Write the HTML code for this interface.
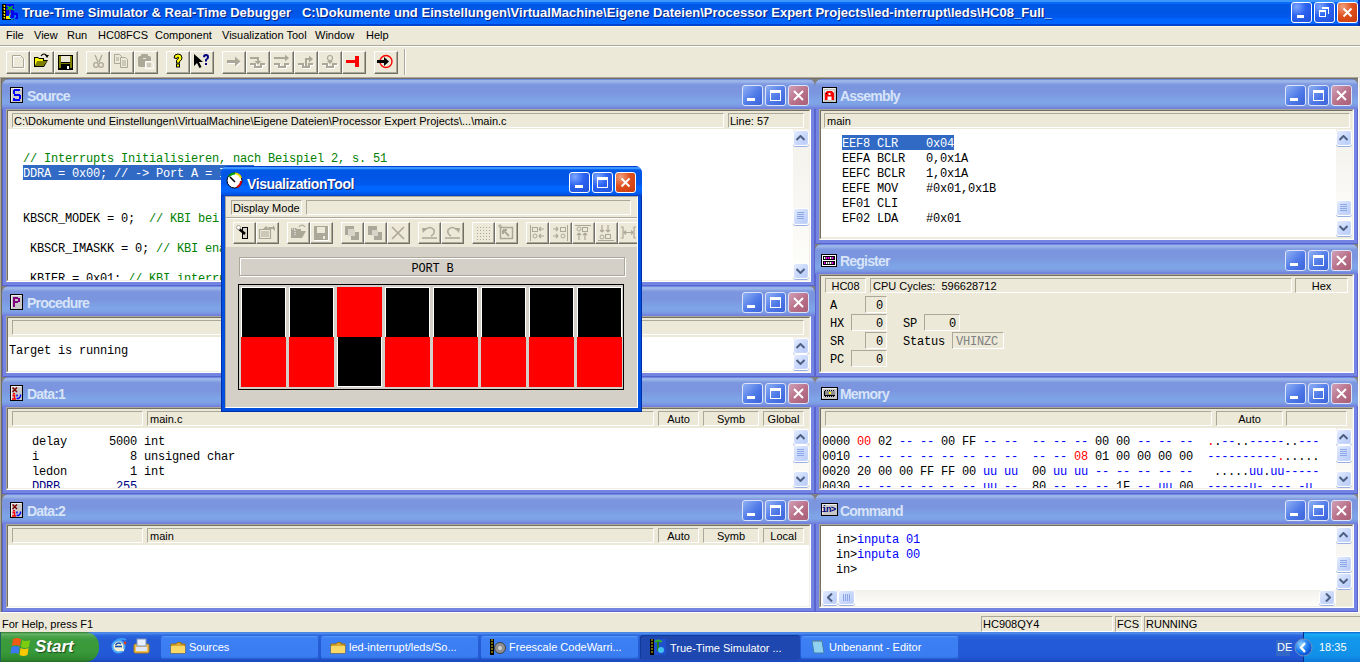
<!DOCTYPE html><html><head><meta charset="utf-8"><style>
*{margin:0;padding:0;box-sizing:border-box}
html,body{width:1360px;height:662px;overflow:hidden;background:#ECE9D8;font-family:"Liberation Sans",sans-serif;font-size:11px;color:#000;position:relative}
div,span.b{position:absolute}
.t{white-space:pre;line-height:13px}
.m{font-family:"Liberation Mono",monospace;font-size:12px;letter-spacing:-0.2px;line-height:15px;white-space:pre}
.cap{left:0;top:0;right:0;height:30px;background:linear-gradient(#6C8CE4 0,#6C8CE4 1px,#9BB5EA 1px,#9BB5EA 3px,#8AA4E4 4px,#7B96DF 6px,#7B96DF 14px,#7EA3E6 21px,#7EA3E6 25px,#7890E0 28px,#6F80DD 29px);border-radius:7px 7px 0 0}
.bd{background:#7484E2;box-shadow:inset 1px 0 0 #5A64CC,inset -1px 0 0 #5A64CC,inset 0 -1px 0 #5A64CC}
.ttl{font-weight:bold;font-size:14px;line-height:16px;color:#D8E4F8;white-space:pre;letter-spacing:-0.8px}
.cl{background:#ECE9D8;border-top:1px solid #ACA899;border-left:1px solid #ACA899;border-right:1px solid #fff;border-bottom:1px solid #fff}
.cl2{left:0;right:0;top:0;bottom:0;border-top:1px solid #716F64;border-left:1px solid #716F64;border-right:1px solid #F1EFE2;border-bottom:1px solid #F1EFE2}
.wb{width:21px;height:21px;border:1px solid #DDE4F8;border-radius:3px;background:linear-gradient(135deg,#8FB0F4 0,#4F7AE8 55%,#3B64DA 100%)}
.wbx{background:linear-gradient(135deg,#D0A0B8 0,#B87088 55%,#A86078 100%)}
.sp{border-top:1px solid #ACA899;border-left:1px solid #ACA899;border-right:1px solid #fff;border-bottom:1px solid #fff;background:#ECE9D8}
.rb{width:24px;height:23px;background:#ECE9D8;border-top:1px solid #fff;border-left:1px solid #fff;border-right:1px solid #716F64;border-bottom:1px solid #716F64;box-shadow:inset -1px -1px 0 #ACA899}
.ico{width:14px;height:17px;border:2px solid #000;background:#C8C8C8}
.wh{background:#fff}
.sbt{background:linear-gradient(180deg,#F3F1EC,#FEFEFB)}
.sbb{width:16px;height:16px;border:1px solid #fff;border-radius:3px;background:linear-gradient(135deg,#E4ECFE 0,#CAD9FC 50%,#B6C9F8 100%);box-shadow:0 1px 0 #98B0E4,inset -1px -1px 0 #C8D6F8}
.g{color:#008000}.bl{color:#0000FF}.nv{color:#000080}.rd{color:#FF0000}.gr{color:#808080}
</style></head><body>
<div style="left:0;top:0;width:1360px;height:26px;background:linear-gradient(#3D95FF 0,#3D95FF 2px,#0A6AF8 2px,#0A6AF8 4px,#0058E6 4px,#0055E5 12px,#005AEE 18px,#0066FF 19px,#0066FF 24px,#0044D0 24px)"></div>
<div class="t" style="left:22px;top:5px;font-size:13px;letter-spacing:0.02px;font-weight:bold;color:#fff;line-height:16px;text-shadow:1px 1px 0 #0A1E7A">True-Time Simulator &amp; Real-Time Debugger   C:\Dokumente und Einstellungen\VirtualMachine\Eigene Dateien\Processor Expert Projects\led-interrupt\leds\HC08_Full_</div>
<svg style="position:absolute;left:2px;top:4px" width="17" height="16"><rect x="0" y="0" width="12" height="16" fill="#000"/><path d="M1.5 1.5h1v1.5M1.5 4.5h1v1.5M1.5 7.5h1v1.5M1.5 10.5h1v1.5M1.5 13.5h1v1" stroke="#F8E800" stroke-width="1.2" fill="none"/><rect x="4" y="0" width="8" height="15" fill="#0000F0"/><path d="M9 8L16 9V15H9Z" fill="#0000F0"/><path d="M8 4V13" stroke="#A08020" stroke-width="1"/><path d="M5 2L8 4L11 2M5 6L8 4L12 6" stroke="#10D010" stroke-width="1.3" fill="none"/><circle cx="8" cy="4" r="1.3" fill="#10C010"/><rect x="4" y="12" width="4" height="3" fill="#F8E800"/><path d="M9 9.5A3 3 0 1 0 13 11" stroke="#20E0F8" stroke-width="1" fill="none"/></svg>
<div style="left:1291px;top:2px;width:21px;height:21px;border:1px solid #fff;border-radius:3px;background:radial-gradient(circle at 25% 20%,#7DA6FF 0,#2B62F0 45%,#1F50D8 100%)"></div><div style="left:1297px;top:15px;width:7px;height:3px;background:#fff"></div>
<div style="left:1314px;top:2px;width:21px;height:21px;border:1px solid #fff;border-radius:3px;background:radial-gradient(circle at 25% 20%,#7DA6FF 0,#2B62F0 45%,#1F50D8 100%)"></div><div style="left:1319px;top:10px;width:7px;height:7px;border:1px solid #fff;border-top-width:2px"></div><div style="left:1322px;top:7px;width:7px;height:7px;border-top:2px solid #fff;border-right:1px solid #fff"></div>
<div style="left:1337px;top:2px;width:21px;height:21px;border:1px solid #fff;border-radius:3px;background:radial-gradient(circle at 25% 20%,#F0A080 0,#E0501C 45%,#C83A10 100%)"></div><svg style="position:absolute;left:1342px;top:7px" width="11" height="11"><path d="M1.5 1.5L9.5 9.5M9.5 1.5L1.5 9.5" stroke="#fff" stroke-width="2"/></svg>
<div style="left:1358px;top:0;width:2px;height:26px;background:#0030B0"></div>
<div style="left:0;top:26px;width:1360px;height:1px;background:#FFF8DC"></div>
<div class="t" style="left:6px;top:29px">File</div>
<div class="t" style="left:34px;top:29px">View</div>
<div class="t" style="left:67px;top:29px">Run</div>
<div class="t" style="left:98px;top:29px">HC08FCS</div>
<div class="t" style="left:155px;top:29px">Component</div>
<div class="t" style="left:222px;top:29px">Visualization Tool</div>
<div class="t" style="left:315px;top:29px">Window</div>
<div class="t" style="left:366px;top:29px">Help</div>
<div style="left:0;top:45px;width:1360px;height:1px;background:#ACA899"></div>
<div style="left:0;top:46px;width:1360px;height:1px;background:#fff"></div>
<div class="rb" style="left:6px;top:51px"></div>
<svg style="position:absolute;left:6px;top:51px" width="24" height="23"><path d="M6.5 4.5H14.5L17.5 7.5V16.5H6.5Z" fill="none" stroke="#fff" transform="translate(1,1)"/><path d="M6.5 4.5H14.5L17.5 7.5V16.5H6.5Z" fill="none" stroke="#ACA899"/></svg>
<div class="rb" style="left:30px;top:51px"></div>
<svg style="position:absolute;left:30px;top:51px" width="24" height="23"><path d="M4 6H8L9 7H14V9H18L14 16H4Z" fill="#000"/><path d="M5 7H8L9 8H13V10L5 14Z" fill="#FFFF00"/><path d="M7 10H17L13.5 15H5Z" fill="#808000"/><path d="M11 5Q14 1 17 5" stroke="#000" stroke-width="1.2" fill="none"/><path d="M15 4H19L17 7Z" fill="#000"/></svg>
<div class="rb" style="left:54px;top:51px"></div>
<svg style="position:absolute;left:54px;top:51px" width="24" height="23"><rect x="4" y="4" width="15" height="15" fill="#000"/><rect x="5" y="5" width="2" height="12" fill="#808000"/><rect x="16" y="5" width="2" height="12" fill="#808000"/><rect x="7" y="5" width="9" height="6" fill="#ECE9D8"/><rect x="7" y="12" width="9" height="1" fill="#808000"/><rect x="13" y="15" width="2" height="3" fill="#fff"/></svg>
<div class="rb" style="left:86px;top:51px"></div>
<svg style="position:absolute;left:86px;top:51px" width="24" height="23"><path d="M9 4L12 11M16 4L13 11" stroke="#ACA899" stroke-width="1.3"/><circle cx="10" cy="14" r="2.3" stroke="#ACA899" fill="none" stroke-width="1.3"/><circle cx="15" cy="14" r="2.3" stroke="#ACA899" fill="none" stroke-width="1.3"/></svg>
<div class="rb" style="left:110px;top:51px"></div>
<svg style="position:absolute;left:110px;top:51px" width="24" height="23"><path d="M4.5 3.5H9.5L11.5 5.5V12.5H4.5Z" fill="#ECE9D8" stroke="#ACA899"/><path d="M10.5 6.5H15.5L17.5 8.5V16.5H10.5Z" fill="#ECE9D8" stroke="#ACA899"/><path d="M6 7H9M6 9H9M12 10H16M12 12H16M12 14H16" stroke="#ACA899"/></svg>
<div class="rb" style="left:134px;top:51px"></div>
<svg style="position:absolute;left:134px;top:51px" width="24" height="23"><rect x="4" y="5" width="13" height="11" rx="2" fill="#ACA899"/><rect x="7" y="3" width="7" height="3" rx="1" fill="#ACA899"/><rect x="9" y="7" width="3" height="1" fill="#ECE9D8"/><path d="M11.5 10.5H17.5L19.5 12.5V17.5H11.5Z" fill="#ECE9D8" stroke="#fff"/><path d="M13 13H17M13 15H17" stroke="#ACA899"/></svg>
<div class="rb" style="left:166px;top:51px"></div>
<svg style="position:absolute;left:166px;top:51px" width="24" height="23"><path d="M8 7Q8 3 12 3Q16 3 16 7Q16 9 13.5 10.5V12H10.5V10Q10.5 8.5 12.5 7.5Q13 6 12 6Q11 6 11 7.5Z" fill="#FFFF00" stroke="#000" stroke-width="1"/><rect x="10.5" y="13" width="3" height="3" fill="#FFFF00" stroke="#000" stroke-width="1"/></svg>
<div class="rb" style="left:190px;top:51px"></div>
<svg style="position:absolute;left:190px;top:51px" width="24" height="23"><path d="M4 3V15L7 12L9.5 17L11.5 16L9 11H13Z" fill="#000"/><path d="M13 6Q13 3 16 3Q19 3 19 6Q19 8 17 9V10.5H15V8.5Q17 7.5 17 6Q17 5 16 5Q15 5 15 6.5Z" fill="#000080"/><rect x="15" y="12" width="2" height="2" fill="#000080"/></svg>
<div class="rb" style="left:222px;top:51px"></div>
<svg style="position:absolute;left:222px;top:51px" width="24" height="23"><path d="M6 11H14V8L19 12L14 16V13H6Z" fill="#fff"/><path d="M5 9H13V5.5L18.5 10.5L13 15.5V12H5Z" fill="#ACA899"/></svg>
<div class="rb" style="left:246px;top:51px"></div>
<svg style="position:absolute;left:246px;top:51px" width="24" height="23"><path d="M5 14H10V17H16V14H20" stroke="#fff" stroke-width="2" fill="none"/><path d="M4 13H9V16H15V13H19" stroke="#ACA899" stroke-width="2" fill="none"/><path d="M4 7H12V10" stroke="#ACA899" stroke-width="2" fill="none"/><path d="M8.5 10H15.5L12 13.5Z" fill="#ACA899"/></svg>
<div class="rb" style="left:270px;top:51px"></div>
<svg style="position:absolute;left:270px;top:51px" width="24" height="23"><path d="M5 14H10V17H16V14H20" stroke="#fff" stroke-width="2" fill="none"/><path d="M4 13H9V16H15V13H19" stroke="#ACA899" stroke-width="2" fill="none"/><path d="M4 7H16" stroke="#ACA899" stroke-width="2"/><path d="M15 3.5L19 7L15 10.5Z" fill="#ACA899"/></svg>
<div class="rb" style="left:294px;top:51px"></div>
<svg style="position:absolute;left:294px;top:51px" width="24" height="23"><path d="M5 14H10V17H16V14H20" stroke="#fff" stroke-width="2" fill="none"/><path d="M4 13H9V16H15V13H19" stroke="#ACA899" stroke-width="2" fill="none"/><path d="M12 15V8H16" stroke="#ACA899" stroke-width="2" fill="none"/><path d="M15 4.5L19 8L15 11.5Z" fill="#ACA899"/></svg>
<div class="rb" style="left:318px;top:51px"></div>
<svg style="position:absolute;left:318px;top:51px" width="24" height="23"><path d="M5 14H10V17H16V14H20" stroke="#fff" stroke-width="2" fill="none"/><path d="M4 13H9V16H15V13H19" stroke="#ACA899" stroke-width="2" fill="none"/><circle cx="12" cy="7" r="2.5" stroke="#ACA899" stroke-width="1.2" fill="none"/><path d="M9 10H15L12 13Z" fill="#ACA899"/></svg>
<div class="rb" style="left:342px;top:51px"></div>
<svg style="position:absolute;left:342px;top:51px" width="24" height="23"><rect x="4" y="9" width="10" height="3" fill="#FF0000"/><rect x="13" y="5" width="4" height="11" fill="#FF0000"/></svg>
<div class="rb" style="left:374px;top:51px"></div>
<svg style="position:absolute;left:374px;top:51px" width="24" height="23"><circle cx="12" cy="10.5" r="6" stroke="#FF0000" stroke-width="1.4" fill="none"/><path d="M3 9H10V6L15 10.5L10 15V12H3Z" fill="#000"/></svg>
<div style="left:404px;top:49px;width:1px;height:26px;background:#ACA899"></div><div style="left:405px;top:49px;width:1px;height:26px;background:#fff"></div>
<div style="left:0;top:77px;width:1359px;height:536px;background:#808080;border-top:1px solid #ACA899;border-left:1px solid #ACA899;border-bottom:1px solid #fff;border-right:1px solid #fff"></div>
<div style="left:1px;top:78px;width:1357px;height:534px;border-top:1px solid #716F64;border-left:1px solid #716F64"></div>
<div style="left:2px;top:79px;width:813px;height:207px;overflow:hidden"><div class="bd" style="left:0;top:7px;right:0;bottom:0"></div><div class="cap"></div><div class="ttl" style="left:25px;top:9px">Source</div><svg style="position:absolute;left:8px;top:8px" width="13" height="16"><rect x="0" y="0" width="13" height="16" fill="#000"/><rect x="1" y="1" width="11" height="14" fill="#C8C8C8"/><path d="M1.5 14.5V1.5H11.5" stroke="#F0F0F0" fill="none"/><path d="M4 2H10V4H5V6H4ZM3 3H5V7H3ZM4 7H10V9H4ZM9 8H11V12H9ZM3 12H10V14H3ZM9 11H10V13H9ZM3 11H5V12H3Z" fill="#0000FF"/></svg><div class="wb" style="left:740px;top:6px"></div><div class="wb" style="left:763px;top:6px"></div><div class="wb wbx" style="left:786px;top:6px"></div><div style="left:745px;top:19px;width:8px;height:3px;background:#fff"></div><div style="left:768px;top:11px;width:11px;height:11px;border:1px solid #fff;border-top-width:3px"></div><svg style="position:absolute;left:791px;top:11px" width="11" height="11"><path d="M1 1L10 10M10 1L1 10" stroke="#fff" stroke-width="2"/></svg><div class="cl" style="left:4px;top:30px;width:805px;height:173px"><div class="cl2"></div></div></div>
<div style="left:2px;top:286px;width:813px;height:91px;overflow:hidden"><div class="bd" style="left:0;top:7px;right:0;bottom:0"></div><div class="cap"></div><div class="ttl" style="left:25px;top:9px">Procedure</div><svg style="position:absolute;left:8px;top:8px" width="13" height="16"><rect x="0" y="0" width="13" height="16" fill="#000"/><rect x="1" y="1" width="11" height="14" fill="#C8C8C8"/><path d="M1.5 14.5V1.5H11.5" stroke="#F0F0F0" fill="none"/><path d="M3 3H8V5H5V7H8V9H5V13H3ZM8 4H10V8H8Z" fill="#800080"/></svg><div class="wb" style="left:740px;top:6px"></div><div class="wb" style="left:763px;top:6px"></div><div class="wb wbx" style="left:786px;top:6px"></div><div style="left:745px;top:19px;width:8px;height:3px;background:#fff"></div><div style="left:768px;top:11px;width:11px;height:11px;border:1px solid #fff;border-top-width:3px"></div><svg style="position:absolute;left:791px;top:11px" width="11" height="11"><path d="M1 1L10 10M10 1L1 10" stroke="#fff" stroke-width="2"/></svg><div class="cl" style="left:4px;top:30px;width:805px;height:57px"><div class="cl2"></div></div></div>
<div style="left:2px;top:377px;width:813px;height:117px;overflow:hidden"><div class="bd" style="left:0;top:7px;right:0;bottom:0"></div><div class="cap"></div><div class="ttl" style="left:25px;top:9px">Data:1</div><svg style="position:absolute;left:8px;top:8px" width="13" height="16"><rect x="0" y="0" width="13" height="16" fill="#000"/><rect x="1" y="1" width="11" height="14" fill="#C8C8C8"/><path d="M1.5 14.5V1.5H11.5" stroke="#F0F0F0" fill="none"/><path d="M2.5 2.5L7 7M7 2.5L2.5 7" stroke="#800000" stroke-width="1.5"/><rect x="3" y="8" width="2" height="1.5" fill="#FF0000"/><path d="M2.5 10.5H4.5V13.5M2 14H6" stroke="#FF0000" stroke-width="1.5" fill="none"/><path d="M7 9.5V11.5M10.5 9.5V11.5M10.5 11.5L8.5 13.5H6.5" stroke="#0000FF" stroke-width="1.5" fill="none"/></svg><div class="wb" style="left:740px;top:6px"></div><div class="wb" style="left:763px;top:6px"></div><div class="wb wbx" style="left:786px;top:6px"></div><div style="left:745px;top:19px;width:8px;height:3px;background:#fff"></div><div style="left:768px;top:11px;width:11px;height:11px;border:1px solid #fff;border-top-width:3px"></div><svg style="position:absolute;left:791px;top:11px" width="11" height="11"><path d="M1 1L10 10M10 1L1 10" stroke="#fff" stroke-width="2"/></svg><div class="cl" style="left:4px;top:30px;width:805px;height:83px"><div class="cl2"></div></div></div>
<div style="left:2px;top:494px;width:813px;height:118px;overflow:hidden"><div class="bd" style="left:0;top:7px;right:0;bottom:0"></div><div class="cap"></div><div class="ttl" style="left:25px;top:9px">Data:2</div><svg style="position:absolute;left:8px;top:8px" width="13" height="16"><rect x="0" y="0" width="13" height="16" fill="#000"/><rect x="1" y="1" width="11" height="14" fill="#C8C8C8"/><path d="M1.5 14.5V1.5H11.5" stroke="#F0F0F0" fill="none"/><path d="M2.5 2.5L7 7M7 2.5L2.5 7" stroke="#800000" stroke-width="1.5"/><rect x="3" y="8" width="2" height="1.5" fill="#FF0000"/><path d="M2.5 10.5H4.5V13.5M2 14H6" stroke="#FF0000" stroke-width="1.5" fill="none"/><path d="M7 9.5V11.5M10.5 9.5V11.5M10.5 11.5L8.5 13.5H6.5" stroke="#0000FF" stroke-width="1.5" fill="none"/></svg><div class="wb" style="left:740px;top:6px"></div><div class="wb" style="left:763px;top:6px"></div><div class="wb wbx" style="left:786px;top:6px"></div><div style="left:745px;top:19px;width:8px;height:3px;background:#fff"></div><div style="left:768px;top:11px;width:11px;height:11px;border:1px solid #fff;border-top-width:3px"></div><svg style="position:absolute;left:791px;top:11px" width="11" height="11"><path d="M1 1L10 10M10 1L1 10" stroke="#fff" stroke-width="2"/></svg><div class="cl" style="left:4px;top:30px;width:805px;height:84px"><div class="cl2"></div></div></div>
<div style="left:815px;top:79px;width:543px;height:165px;overflow:hidden"><div class="bd" style="left:0;top:7px;right:0;bottom:0"></div><div class="cap"></div><div class="ttl" style="left:25px;top:9px">Assembly</div><svg style="position:absolute;left:7px;top:8px" width="15" height="16"><rect x="0" y="0" width="15" height="16" fill="#000"/><rect x="1" y="1" width="13" height="14" fill="#C8C8C8"/><path d="M1.5 14.5V1.5H13.5" stroke="#F0F0F0" fill="none"/><path d="M3 3.5H12V13H3Z" fill="#fff"/><path d="M3 13V6L5 4H10L12 6V13H9.5V9.5H5.5V13Z" fill="#FF0000"/><rect x="6.5" y="6" width="2" height="2" fill="#fff"/><rect x="4" y="6" width="1" height="1" fill="#000"/></svg><div class="wb" style="left:470px;top:6px"></div><div class="wb" style="left:493px;top:6px"></div><div class="wb wbx" style="left:516px;top:6px"></div><div style="left:475px;top:19px;width:8px;height:3px;background:#fff"></div><div style="left:498px;top:11px;width:11px;height:11px;border:1px solid #fff;border-top-width:3px"></div><svg style="position:absolute;left:521px;top:11px" width="11" height="11"><path d="M1 1L10 10M10 1L1 10" stroke="#fff" stroke-width="2"/></svg><div class="cl" style="left:4px;top:30px;width:535px;height:131px"><div class="cl2"></div></div></div>
<div style="left:815px;top:244px;width:543px;height:133px;overflow:hidden"><div class="bd" style="left:0;top:7px;right:0;bottom:0"></div><div class="cap"></div><div class="ttl" style="left:25px;top:9px">Register</div><svg style="position:absolute;left:6px;top:10px" width="16" height="13"><rect x="0" y="0" width="16" height="13" fill="#000"/><rect x="1" y="1" width="14" height="11" fill="#C8C8C8"/><path d="M1.5 11.5V1.5H14.5" stroke="#F0F0F0" fill="none"/><rect x="1" y="1" width="14" height="11" fill="#fff"/><rect x="2" y="2" width="12" height="4" fill="#000"/><rect x="2" y="7" width="12" height="4" fill="#000"/><rect x="3" y="3" width="1.4" height="2" fill="#fff"/><rect x="5" y="3" width="1.4" height="2" fill="#FF00FF"/><rect x="7" y="3" width="1.4" height="2" fill="#FF00FF"/><rect x="9" y="3" width="1.4" height="2" fill="#fff"/><rect x="11" y="3" width="1.4" height="2" fill="#FF00FF"/><rect x="3" y="8" width="1.4" height="2" fill="#FF00FF"/><rect x="5" y="8" width="1.4" height="2" fill="#fff"/><rect x="7" y="8" width="1.4" height="2" fill="#fff"/><rect x="9" y="8" width="1.4" height="2" fill="#fff"/><rect x="11" y="8" width="1.4" height="2" fill="#FF00FF"/></svg><div class="wb" style="left:470px;top:6px"></div><div class="wb" style="left:493px;top:6px"></div><div class="wb wbx" style="left:516px;top:6px"></div><div style="left:475px;top:19px;width:8px;height:3px;background:#fff"></div><div style="left:498px;top:11px;width:11px;height:11px;border:1px solid #fff;border-top-width:3px"></div><svg style="position:absolute;left:521px;top:11px" width="11" height="11"><path d="M1 1L10 10M10 1L1 10" stroke="#fff" stroke-width="2"/></svg><div class="cl" style="left:4px;top:30px;width:535px;height:99px"><div class="cl2"></div></div></div>
<div style="left:815px;top:377px;width:543px;height:117px;overflow:hidden"><div class="bd" style="left:0;top:7px;right:0;bottom:0"></div><div class="cap"></div><div class="ttl" style="left:25px;top:9px">Memory</div><svg style="position:absolute;left:6px;top:10px" width="17" height="13"><rect x="0" y="0" width="17" height="13" fill="#000"/><rect x="1" y="1" width="15" height="11" fill="#C8C8C8"/><path d="M1.5 11.5V1.5H15.5" stroke="#F0F0F0" fill="none"/><rect x="3" y="4" width="11" height="5" fill="#000"/><rect x="4" y="4" width="10" height="4" fill="#909090"/><rect x="8" y="5" width="2" height="2" fill="#FFFF00"/><path d="M4 3.5H5M6 3.5H7M8 3.5H9M10 3.5H11M12 3.5H13M4 9.5H5M6 9.5H7M8 9.5H9M10 9.5H11M12 9.5H13" stroke="#000"/></svg><div class="wb" style="left:470px;top:6px"></div><div class="wb" style="left:493px;top:6px"></div><div class="wb wbx" style="left:516px;top:6px"></div><div style="left:475px;top:19px;width:8px;height:3px;background:#fff"></div><div style="left:498px;top:11px;width:11px;height:11px;border:1px solid #fff;border-top-width:3px"></div><svg style="position:absolute;left:521px;top:11px" width="11" height="11"><path d="M1 1L10 10M10 1L1 10" stroke="#fff" stroke-width="2"/></svg><div class="cl" style="left:4px;top:30px;width:535px;height:83px"><div class="cl2"></div></div></div>
<div style="left:815px;top:494px;width:543px;height:118px;overflow:hidden"><div class="bd" style="left:0;top:7px;right:0;bottom:0"></div><div class="cap"></div><div class="ttl" style="left:25px;top:9px">Command</div><svg style="position:absolute;left:6px;top:9px" width="17" height="13"><rect x="0" y="0" width="17" height="13" fill="#000"/><rect x="1" y="1" width="15" height="11" fill="#C8C8C8"/><path d="M1.5 11.5V1.5H15.5" stroke="#F0F0F0" fill="none"/><text x="0.5" y="9" font-family="Liberation Mono" font-weight="bold" font-size="9" fill="#000080" letter-spacing="-0.8">in&gt;</text></svg><div class="wb" style="left:470px;top:6px"></div><div class="wb" style="left:493px;top:6px"></div><div class="wb wbx" style="left:516px;top:6px"></div><div style="left:475px;top:19px;width:8px;height:3px;background:#fff"></div><div style="left:498px;top:11px;width:11px;height:11px;border:1px solid #fff;border-top-width:3px"></div><svg style="position:absolute;left:521px;top:11px" width="11" height="11"><path d="M1 1L10 10M10 1L1 10" stroke="#fff" stroke-width="2"/></svg><div class="cl" style="left:4px;top:30px;width:535px;height:84px"><div class="cl2"></div></div></div>
<div class="sp" style="left:12px;top:113px;width:712px;height:15px"></div><div class="t" style="left:14px;top:115px">C:\Dokumente und Einstellungen\VirtualMachine\Eigene Dateien\Processor Expert Projects\...\main.c</div>
<div class="sp" style="left:728px;top:113px;width:76px;height:15px"></div><div class="t" style="left:730px;top:115px">Line: 57</div>
<div class="wh" style="left:8px;top:129px;width:785px;height:151px"></div>
<div class="sbt" style="left:793px;top:129px;width:16px;height:151px"></div><div class="sbb" style="left:793px;top:130px"></div><svg style="position:absolute;left:796px;top:135px" width="9" height="6"><path d="M0.5 5 L4.5 1 L8.5 5" stroke="#4D6185" stroke-width="2" fill="none"/></svg><div class="sbb" style="left:793px;top:208px;height:17px"></div><svg style="position:absolute;left:797px;top:212px" width="7" height="8"><path d="M0 0.5h7M0 2.5h7M0 4.5h7M0 6.5h7" stroke="#8CA6E6" stroke-width="1"/></svg><div class="sbb" style="left:793px;top:263px"></div><svg style="position:absolute;left:796px;top:268px" width="9" height="6"><path d="M0.5 1 L4.5 5 L8.5 1" stroke="#4D6185" stroke-width="2" fill="none"/></svg>
<div style="left:23px;top:165px;width:231px;height:15px;background:#316AC5"></div>
<div style="left:8px;top:129px;width:784px;height:151px;overflow:hidden"><div class="m" style="left:15px;top:23px"><span class="g">// Interrupts Initialisieren, nach Beispiel 2, s. 51</span>
<span style="color:#fff">DDRA = 0x00; // -&gt; Port A = Input</span>


KBSCR_MODEK = 0;  <span class="g">// KBI bei Flanke</span>

 KBSCR_IMASKK = 0; <span class="g">// KBI enable</span>

 KBIER = 0x01; <span class="g">// KBI interrupt</span></div></div>
<div class="sp" style="left:12px;top:320px;width:792px;height:15px"></div>
<div class="wh" style="left:8px;top:337px;width:785px;height:34px"></div>
<div class="sbt" style="left:793px;top:337px;width:16px;height:34px"></div><div class="sbb" style="left:793px;top:338px"></div><svg style="position:absolute;left:796px;top:343px" width="9" height="6"><path d="M0.5 5 L4.5 1 L8.5 5" stroke="#4D6185" stroke-width="2" fill="none"/></svg><div class="sbb" style="left:793px;top:354px"></div><svg style="position:absolute;left:796px;top:359px" width="9" height="6"><path d="M0.5 1 L4.5 5 L8.5 1" stroke="#4D6185" stroke-width="2" fill="none"/></svg>
<div class="m" style="left:9px;top:344px">Target is running</div>
<div class="sp" style="left:12px;top:411px;width:131px;height:15px"></div>
<div class="sp" style="left:147px;top:411px;width:507px;height:15px"></div><div class="t" style="left:150px;top:413px">main.c</div>
<div class="sp" style="left:658px;top:411px;width:41px;height:15px"></div><div class="t" style="left:658px;top:413px;width:41px;text-align:center">Auto</div>
<div class="sp" style="left:703px;top:411px;width:56px;height:15px"></div><div class="t" style="left:703px;top:413px;width:56px;text-align:center">Symb</div>
<div class="sp" style="left:763px;top:411px;width:41px;height:15px"></div><div class="t" style="left:763px;top:413px;width:41px;text-align:center">Global</div>
<div class="wh" style="left:8px;top:428px;width:785px;height:60px"></div>
<div class="sbt" style="left:793px;top:428px;width:16px;height:60px"></div><div class="sbb" style="left:793px;top:429px"></div><svg style="position:absolute;left:796px;top:434px" width="9" height="6"><path d="M0.5 5 L4.5 1 L8.5 5" stroke="#4D6185" stroke-width="2" fill="none"/></svg><div class="sbb" style="left:793px;top:445px;height:17px"></div><svg style="position:absolute;left:797px;top:449px" width="7" height="8"><path d="M0 0.5h7M0 2.5h7M0 4.5h7M0 6.5h7" stroke="#8CA6E6" stroke-width="1"/></svg><div class="sbb" style="left:793px;top:471px"></div><svg style="position:absolute;left:796px;top:476px" width="9" height="6"><path d="M0.5 1 L4.5 5 L8.5 1" stroke="#4D6185" stroke-width="2" fill="none"/></svg>
<div style="left:8px;top:428px;width:784px;height:60px;overflow:hidden"><div class="m" style="left:24px;top:7px">delay      5000 int
i             8 unsigned char
ledon         1 int
<span class="nv">DDRB        255</span></div></div>
<div class="sp" style="left:12px;top:528px;width:131px;height:15px"></div>
<div class="sp" style="left:147px;top:528px;width:507px;height:15px"></div><div class="t" style="left:150px;top:530px">main</div>
<div class="sp" style="left:658px;top:528px;width:41px;height:15px"></div><div class="t" style="left:658px;top:530px;width:41px;text-align:center">Auto</div>
<div class="sp" style="left:703px;top:528px;width:56px;height:15px"></div><div class="t" style="left:703px;top:530px;width:56px;text-align:center">Symb</div>
<div class="sp" style="left:763px;top:528px;width:41px;height:15px"></div><div class="t" style="left:763px;top:530px;width:41px;text-align:center">Local</div>
<div class="wh" style="left:8px;top:545px;width:801px;height:61px"></div>
<div class="sp" style="left:824px;top:113px;width:526px;height:15px"></div><div class="t" style="left:827px;top:115px">main</div>
<div class="wh" style="left:821px;top:129px;width:515px;height:108px"></div>
<div class="sbt" style="left:1336px;top:129px;width:16px;height:108px"></div><div class="sbb" style="left:1336px;top:130px"></div><svg style="position:absolute;left:1339px;top:135px" width="9" height="6"><path d="M0.5 5 L4.5 1 L8.5 5" stroke="#4D6185" stroke-width="2" fill="none"/></svg><div class="sbb" style="left:1336px;top:200px;height:16px"></div><svg style="position:absolute;left:1340px;top:204px" width="7" height="8"><path d="M0 0.5h7M0 2.5h7M0 4.5h7M0 6.5h7" stroke="#8CA6E6" stroke-width="1"/></svg><div class="sbb" style="left:1336px;top:220px"></div><svg style="position:absolute;left:1339px;top:225px" width="9" height="6"><path d="M0.5 1 L4.5 5 L8.5 1" stroke="#4D6185" stroke-width="2" fill="none"/></svg>
<div style="left:842px;top:135px;width:112px;height:15px;background:#316AC5"></div>
<div class="m" style="left:842px;top:137px"><span style="color:#fff">EEF8 CLR    0x04</span>
EEFA BCLR   0,0x1A
EEFC BCLR   1,0x1A
EEFE MOV    #0x01,0x1B
EF01 CLI
EF02 LDA    #0x01</div>
<div class="sp" style="left:825px;top:278px;width:41px;height:15px"></div><div class="t" style="left:825px;top:280px;width:41px;text-align:center">HC08</div>
<div class="sp" style="left:870px;top:278px;width:422px;height:15px"></div><div class="t" style="left:873px;top:280px">CPU Cycles:  596628712</div>
<div class="sp" style="left:1295px;top:278px;width:53px;height:15px"></div><div class="t" style="left:1295px;top:280px;width:53px;text-align:center">Hex</div>
<div class="m" style="left:830px;top:299px">A</div>
<div class="sp" style="left:865px;top:296px;width:22px;height:17px"></div><div class="m" style="left:876px;top:299px">0</div>
<div class="m" style="left:830px;top:317px">HX</div>
<div class="sp" style="left:851px;top:314px;width:36px;height:17px"></div><div class="m" style="left:876px;top:317px">0</div>
<div class="m" style="left:830px;top:335px">SR</div>
<div class="sp" style="left:865px;top:332px;width:22px;height:17px"></div><div class="m" style="left:876px;top:335px">0</div>
<div class="m" style="left:830px;top:353px">PC</div>
<div class="sp" style="left:851px;top:350px;width:36px;height:17px"></div><div class="m" style="left:876px;top:353px">0</div>
<div class="m" style="left:903px;top:317px">SP</div><div class="sp" style="left:924px;top:314px;width:36px;height:17px"></div><div class="m" style="left:949px;top:317px">0</div>
<div class="m" style="left:903px;top:335px">Status</div><div class="sp" style="left:952px;top:332px;width:52px;height:17px"></div><div class="m gr" style="left:956px;top:335px">VHINZC</div>
<div class="sp" style="left:825px;top:411px;width:387px;height:15px"></div>
<div class="sp" style="left:1216px;top:411px;width:67px;height:15px"></div><div class="t" style="left:1216px;top:413px;width:67px;text-align:center">Auto</div>
<div class="sp" style="left:1286px;top:411px;width:61px;height:15px"></div>
<div class="wh" style="left:821px;top:428px;width:515px;height:60px"></div>
<div class="sbt" style="left:1336px;top:428px;width:16px;height:60px"></div><div class="sbb" style="left:1336px;top:429px"></div><svg style="position:absolute;left:1339px;top:434px" width="9" height="6"><path d="M0.5 5 L4.5 1 L8.5 5" stroke="#4D6185" stroke-width="2" fill="none"/></svg><div class="sbb" style="left:1336px;top:445px;height:17px"></div><svg style="position:absolute;left:1340px;top:449px" width="7" height="8"><path d="M0 0.5h7M0 2.5h7M0 4.5h7M0 6.5h7" stroke="#8CA6E6" stroke-width="1"/></svg><div class="sbb" style="left:1336px;top:471px"></div><svg style="position:absolute;left:1339px;top:476px" width="9" height="6"><path d="M0.5 1 L4.5 5 L8.5 1" stroke="#4D6185" stroke-width="2" fill="none"/></svg>
<div style="left:821px;top:428px;width:515px;height:60px;overflow:hidden"><div class="m" style="left:1px;top:7px">0000 <span class="rd">00</span> 02 <span class="bl">-- --</span> 00 FF <span class="bl">-- --  -- -- --</span> 00 00 <span class="bl">-- -- --</span>  <span class="rd">.</span>.<span class="bl">--</span>..<span class="bl">-----</span>..<span class="bl">---</span>
0010 <span class="bl">-- -- -- -- -- -- -- --  -- --</span> <span class="rd">08</span> 01 00 00 00 00  <span class="bl">----------</span><span class="rd">.</span>.....
0020 20 00 00 FF FF 00 <span class="bl">uu uu</span>  00 <span class="bl">uu uu -- -- -- -- --</span>   .....<span class="bl">uu</span>.<span class="bl">uu-----</span>
0030 <span class="bl">-- -- -- -- -- -- uu --</span>  80 <span class="bl">-- -- --</span> 1F <span class="bl">--</span> <span class="bl">uu</span> 00  <span class="bl">------u-</span>.<span class="bl">---</span>.<span class="bl">-u</span>.</div></div>
<div class="wh" style="left:821px;top:526px;width:515px;height:64px"></div>
<div class="sbt" style="left:1336px;top:526px;width:16px;height:64px"></div><div class="sbb" style="left:1336px;top:527px"></div><svg style="position:absolute;left:1339px;top:532px" width="9" height="6"><path d="M0.5 5 L4.5 1 L8.5 5" stroke="#4D6185" stroke-width="2" fill="none"/></svg><div class="sbb" style="left:1336px;top:556px;height:16px"></div><svg style="position:absolute;left:1340px;top:560px" width="7" height="8"><path d="M0 0.5h7M0 2.5h7M0 4.5h7M0 6.5h7" stroke="#8CA6E6" stroke-width="1"/></svg><div class="sbb" style="left:1336px;top:573px"></div><svg style="position:absolute;left:1339px;top:578px" width="9" height="6"><path d="M0.5 1 L4.5 5 L8.5 1" stroke="#4D6185" stroke-width="2" fill="none"/></svg>
<div class="sbt" style="left:821px;top:590px;width:515px;height:16px"></div>
<div class="sbb" style="left:822px;top:590px;width:16px;height:15px"></div><svg style="position:absolute;left:827px;top:593px" width="6" height="9"><path d="M5 0.5 L1 4.5 L5 8.5" stroke="#4D6185" stroke-width="2" fill="none"/></svg>
<div class="sbb" style="left:838px;top:590px;width:17px;height:15px"></div><svg style="position:absolute;left:843px;top:594px" width="8" height="7"><path d="M0.5 0v7M2.5 0v7M4.5 0v7M6.5 0v7" stroke="#8CA6E6" stroke-width="1"/></svg>
<div class="sbb" style="left:1319px;top:590px;width:16px;height:15px"></div><svg style="position:absolute;left:1325px;top:593px" width="6" height="9"><path d="M1 0.5 L5 4.5 L1 8.5" stroke="#4D6185" stroke-width="2" fill="none"/></svg>
<div class="m" style="left:836px;top:533px">in&gt;<span class="bl">inputa 01</span>
in&gt;<span class="bl">inputa 00</span>
in&gt;</div>
<div style="left:221px;top:166px;width:421px;height:246px;border-radius:7px 7px 0 0;overflow:hidden;background:#0050E0">
<div style="left:0;top:0;right:0;height:30px;background:linear-gradient(#0040D0 0,#0040D0 1px,#3D95FF 1px,#3D95FF 3px,#0A6AF8 3px,#0A6AF8 4px,#0058E6 4px,#0055E5 10px,#005AEE 19px,#0066FF 20px,#0066FF 25px,#0050E0 29px,#0040C8 29px)"></div>
<div style="left:0;top:30px;width:1px;bottom:0;background:#0030A8"></div><div style="right:0;top:30px;width:1px;bottom:0;background:#0030A8"></div><div style="left:0;right:0;height:1px;bottom:0;background:#0030A8"></div>
<div class="t" style="left:26px;top:10px;font-size:14px;letter-spacing:-0.4px;font-weight:bold;color:#fff;line-height:16px;text-shadow:1px 1px 0 #0A1E7A">VisualizationTool</div>
</div>
<div style="left:569px;top:172px;width:21px;height:21px;border:1px solid #fff;border-radius:3px;background:radial-gradient(circle at 25% 20%,#7DA6FF 0,#2B62F0 45%,#1F50D8 100%)"></div>
<div style="left:592px;top:172px;width:21px;height:21px;border:1px solid #fff;border-radius:3px;background:radial-gradient(circle at 25% 20%,#7DA6FF 0,#2B62F0 45%,#1F50D8 100%)"></div>
<div style="left:615px;top:172px;width:21px;height:21px;border:1px solid #fff;border-radius:3px;background:radial-gradient(circle at 25% 20%,#F0A080 0,#E0501C 45%,#C83A10 100%)"></div>
<div style="left:575px;top:185px;width:8px;height:3px;background:#fff"></div>
<div style="left:597px;top:177px;width:11px;height:11px;border:1px solid #fff;border-top-width:3px"></div>
<svg style="position:absolute;left:620px;top:177px" width="11" height="11"><path d="M1.5 1.5L9.5 9.5M9.5 1.5L1.5 9.5" stroke="#fff" stroke-width="2"/></svg>
<div style="left:225px;top:196px;width:413px;height:212px;background:#D4D0C8;border-top:1px solid #ACA899;border-left:1px solid #ACA899;border-right:1px solid #fff;border-bottom:1px solid #fff"></div>
<div style="left:226px;top:197px;width:411px;height:50px;background:#ECE9D8"></div>
<div class="sp" style="left:231px;top:200px;width:71px;height:15px"></div><div class="t" style="left:233px;top:202px">Display Mode</div>
<div class="sp" style="left:306px;top:200px;width:325px;height:15px"></div>
<div style="left:226px;top:217px;width:411px;height:1px;background:#ACA899"></div><div style="left:226px;top:218px;width:411px;height:1px;background:#fff"></div>
<div style="left:226px;top:197px;width:411px;height:210px;overflow:hidden">
<div class="rb" style="left:7px;top:25px;width:23px;height:22px"></div>
<svg style="position:absolute;left:7px;top:25px" width="23" height="22"><rect x="9.5" y="5.5" width="5" height="11" fill="#D8D4C8" stroke="#000"/><path d="M5 6L12 12" stroke="#000" stroke-width="2.5"/><circle cx="5.5" cy="5.5" r="2" fill="#fff" stroke="#ACA899"/></svg>
<div class="rb" style="left:30px;top:25px;width:23px;height:22px"></div>
<svg style="position:absolute;left:30px;top:25px" width="23" height="22"><path d="M3.5 7.5H14.5V16.5H3.5Z" fill="none" stroke="#ACA899" stroke-width="1.2"/><path d="M5 10H13M5 12H13M5 14H13" stroke="#ACA899"/><path d="M7 7L10 4L13 7" fill="#ACA899"/><path d="M12 5H17V3L19 6V9L17 7H13" fill="#ACA899"/></svg>
<div class="rb" style="left:61px;top:25px;width:23px;height:22px"></div>
<svg style="position:absolute;left:61px;top:25px" width="23" height="22"><path d="M4 6H9L10 7H14V9H19L15 16H4Z" fill="#ACA899"/><path d="M5 7H8V13" stroke="#fff" stroke-width="1" stroke-dasharray="1 1" fill="none"/><path d="M12 5Q15 1 18 5" stroke="#ACA899" stroke-width="1.2" fill="none"/></svg>
<div class="rb" style="left:84px;top:25px;width:23px;height:22px"></div>
<svg style="position:absolute;left:84px;top:25px" width="23" height="22"><rect x="4" y="4" width="14" height="14" fill="#ACA899"/><rect x="7" y="5" width="8" height="6" fill="#ECE9D8"/><rect x="13" y="14" width="2" height="3" fill="#ECE9D8"/><path d="M4 18.5H18.5V4" stroke="#fff" fill="none"/></svg>
<div class="rb" style="left:115px;top:25px;width:23px;height:22px"></div>
<svg style="position:absolute;left:115px;top:25px" width="23" height="22"><rect x="4" y="4" width="9" height="9" fill="#ACA899"/><rect x="10" y="10" width="8" height="8" fill="#ACA899"/><rect x="7" y="7" width="7" height="7" fill="#D8D4C8"/></svg>
<div class="rb" style="left:138px;top:25px;width:23px;height:22px"></div>
<svg style="position:absolute;left:138px;top:25px" width="23" height="22"><rect x="4" y="4" width="9" height="9" fill="#ACA899"/><rect x="10" y="10" width="8" height="8" fill="#ACA899"/><rect x="8" y="8" width="6" height="6" fill="#D8D4C8"/></svg>
<div class="rb" style="left:161px;top:25px;width:23px;height:22px"></div>
<svg style="position:absolute;left:161px;top:25px" width="23" height="22"><path d="M5 5L17 17M17 5L5 17" stroke="#ACA899" stroke-width="1.6"/></svg>
<div class="rb" style="left:192px;top:25px;width:23px;height:22px"></div>
<svg style="position:absolute;left:192px;top:25px" width="23" height="22"><path d="M7 8Q12 3 16 8Q17 12 13 14" stroke="#ACA899" stroke-width="1.5" fill="none"/><path d="M4 6L9 6L5 11Z" fill="#ACA899"/><path d="M4 16H13M14 15V17M16 15V17M18 15V17" stroke="#ACA899" stroke-width="1.5"/></svg>
<div class="rb" style="left:215px;top:25px;width:23px;height:22px"></div>
<svg style="position:absolute;left:215px;top:25px" width="23" height="22"><path d="M16 8Q11 3 7 8Q6 12 10 14" stroke="#ACA899" stroke-width="1.5" fill="none"/><path d="M19 6L14 6L18 11Z" fill="#ACA899"/><path d="M10 16H19M5 15V17M7 15V17M9 15V17" stroke="#ACA899" stroke-width="1.5"/></svg>
<div class="rb" style="left:246px;top:25px;width:23px;height:22px"></div>
<svg style="position:absolute;left:246px;top:25px" width="23" height="22"><path d="M5 5.5H18M5 8.5H18M5 11.5H18M5 14.5H18M5 17.5H18" stroke="#ACA899" stroke-dasharray="1 2"/></svg>
<div class="rb" style="left:269px;top:25px;width:23px;height:22px"></div>
<svg style="position:absolute;left:269px;top:25px" width="23" height="22"><rect x="5.5" y="5.5" width="12" height="11" fill="none" stroke="#ACA899" stroke-width="1.5"/><path d="M8 8L14 14M8 8H12M8 8V12" stroke="#ACA899" stroke-width="2"/><path d="M3 4H7M5 2V6" stroke="#ACA899"/></svg>
<div class="rb" style="left:300px;top:25px;width:23px;height:22px"></div>
<svg style="position:absolute;left:300px;top:25px" width="23" height="22"><path d="M4.5 3V19" stroke="#ACA899"/><rect x="6.5" y="5.5" width="5" height="4" fill="none" stroke="#ACA899"/><circle cx="9" cy="14" r="2" fill="none" stroke="#ACA899"/><path d="M13 7H18M13 14H18M13 7L15 5M13 7L15 9M13 14L15 12M13 14L15 16" stroke="#ACA899" stroke-width="1.2"/></svg>
<div class="rb" style="left:323px;top:25px;width:23px;height:22px"></div>
<svg style="position:absolute;left:323px;top:25px" width="23" height="22"><path d="M18.5 3V19" stroke="#ACA899"/><rect x="11.5" y="5.5" width="5" height="4" fill="none" stroke="#ACA899"/><circle cx="14" cy="14" r="2" fill="none" stroke="#ACA899"/><path d="M4 7H9M4 14H9M9 7L7 5M9 7L7 9M9 14L7 12M9 14L7 16" stroke="#ACA899" stroke-width="1.2"/></svg>
<div class="rb" style="left:346px;top:25px;width:23px;height:22px"></div>
<svg style="position:absolute;left:346px;top:25px" width="23" height="22"><path d="M3 3.5H19" stroke="#ACA899"/><circle cx="7" cy="7" r="2" fill="none" stroke="#ACA899"/><rect x="10.5" y="5.5" width="5" height="4" fill="none" stroke="#ACA899"/><path d="M7 11V18M13 11V18M7 11L5 13M7 11L9 13M13 11L11 13M13 11L15 13" stroke="#ACA899" stroke-width="1.2"/></svg>
<div class="rb" style="left:369px;top:25px;width:23px;height:22px"></div>
<svg style="position:absolute;left:369px;top:25px" width="23" height="22"><path d="M3 18.5H19" stroke="#ACA899"/><circle cx="7" cy="15" r="2" fill="none" stroke="#ACA899"/><rect x="10.5" y="12.5" width="5" height="4" fill="none" stroke="#ACA899"/><path d="M7 3V10M13 3V10M7 10L5 8M7 10L9 8M13 10L11 8M13 10L15 8" stroke="#ACA899" stroke-width="1.2"/></svg>
<div class="rb" style="left:392px;top:25px;width:23px;height:22px"></div>
<svg style="position:absolute;left:392px;top:25px" width="23" height="22"><path d="M3 5H5V16H3M18 5H16V16H18M6 10.5H15M6 10.5L8 8.5M6 10.5L8 12.5M15 10.5L13 8.5M15 10.5L13 12.5" stroke="#ACA899" stroke-width="1.2" fill="none"/></svg>
</div>
<svg style="position:absolute;left:226px;top:172px" width="17" height="17"><circle cx="8.5" cy="8.5" r="7.5" fill="#fff" stroke="#000" stroke-width="1"/><path d="M3 4.5A7 7 0 0 1 9 1.5" stroke="#00A000" stroke-width="2" fill="none"/><path d="M9 1.5A7 7 0 0 1 15 6" stroke="#E8E000" stroke-width="2" fill="none"/><path d="M15 9A7 7 0 0 1 11 15" stroke="#E00000" stroke-width="2" fill="none"/><path d="M4 5L9 10" stroke="#000" stroke-width="1.6"/></svg>
<div style="left:240px;top:258px;width:386px;height:19px;border:1px solid #fff"></div>
<div style="left:239px;top:257px;width:386px;height:19px;border:1px solid #ACA899"></div>
<div class="m" style="left:239px;top:262px;width:387px;text-align:center">PORT B</div>
<div style="left:238px;top:284px;width:386px;height:106px;border:1px solid #000;background:#D4D0C8"></div>
<div style="left:241px;top:287px;width:45px;height:50px;background:#000;border-top:1px solid #fff;border-left:1px solid #fff;border-right:1px solid #fff"></div>
<div style="left:241px;top:337px;width:45px;height:50px;background:#FF0000"></div>
<div style="left:289px;top:287px;width:45px;height:50px;background:#000;border-top:1px solid #fff;border-left:1px solid #fff;border-right:1px solid #fff"></div>
<div style="left:289px;top:337px;width:45px;height:50px;background:#FF0000"></div>
<div style="left:337px;top:287px;width:45px;height:50px;background:#FF0000"></div>
<div style="left:337px;top:337px;width:45px;height:50px;background:#000;border-left:1px solid #fff;border-bottom:1px solid #fff;border-right:1px solid #fff"></div>
<div style="left:385px;top:287px;width:45px;height:50px;background:#000;border-top:1px solid #fff;border-left:1px solid #fff;border-right:1px solid #fff"></div>
<div style="left:385px;top:337px;width:45px;height:50px;background:#FF0000"></div>
<div style="left:433px;top:287px;width:45px;height:50px;background:#000;border-top:1px solid #fff;border-left:1px solid #fff;border-right:1px solid #fff"></div>
<div style="left:433px;top:337px;width:45px;height:50px;background:#FF0000"></div>
<div style="left:481px;top:287px;width:45px;height:50px;background:#000;border-top:1px solid #fff;border-left:1px solid #fff;border-right:1px solid #fff"></div>
<div style="left:481px;top:337px;width:45px;height:50px;background:#FF0000"></div>
<div style="left:529px;top:287px;width:45px;height:50px;background:#000;border-top:1px solid #fff;border-left:1px solid #fff;border-right:1px solid #fff"></div>
<div style="left:529px;top:337px;width:45px;height:50px;background:#FF0000"></div>
<div style="left:577px;top:287px;width:45px;height:50px;background:#000;border-top:1px solid #fff;border-left:1px solid #fff;border-right:1px solid #fff"></div>
<div style="left:577px;top:337px;width:45px;height:50px;background:#FF0000"></div>
<div style="left:0;top:612px;width:1360px;height:1px;background:#fff"></div>
<div class="t" style="left:2px;top:618px">For Help, press F1</div>
<div class="sp" style="left:981px;top:616px;width:132px;height:16px"></div><div class="t" style="left:983px;top:618px">HC908QY4</div>
<div class="sp" style="left:1115px;top:616px;width:27px;height:16px"></div><div class="t" style="left:1117px;top:618px">FCS</div>
<div class="sp" style="left:1144px;top:616px;width:217px;height:16px"></div><div class="t" style="left:1146px;top:618px">RUNNING</div>
<div style="left:0;top:632px;width:1360px;height:30px;background:linear-gradient(#3A6FD8 0,#5C9AF0 1px,#3B7BE8 2px,#2A64DC 4px,#245CD8 8px,#2258D6 24px,#1E50C8 28px,#1A46B8 30px)"></div>
<div style="left:0;top:632px;width:99px;height:30px;border-radius:0 14px 14px 0;background:linear-gradient(#2E7A2E 0,#69B469 2px,#4EA64E 4px,#3C9A3C 8px,#389A38 20px,#2F8A2F 27px,#256F25 30px)"></div>
<div style="left:0;top:632px;width:1px;height:30px;background:#1E6060"></div>
<svg style="position:absolute;left:9px;top:637px" width="22" height="20"><path d="M4 2Q8 0 12 2L11 9Q7 7 3 9Z" fill="#F05A14"/><path d="M13 3Q17 5 21 3L20 10Q16 12 12 10Z" fill="#7CCC10"/><path d="M2.5 10Q6.5 8 10.5 10L9.5 17Q5.5 15 1.5 17Z" fill="#3C78F0"/><path d="M11.5 11Q15.5 13 19.5 11L18.5 18Q14.5 20 10.5 18Z" fill="#F8C800"/></svg>
<div class="t" style="left:35px;top:637px;font-size:17px;line-height:20px;font-weight:bold;font-style:italic;color:#fff;text-shadow:1px 1px 1px #1A4A1A">Start</div>
<svg style="position:absolute;left:111px;top:638px" width="16" height="16"><circle cx="7.5" cy="8.5" r="6" fill="#F4F0D0" stroke="#4AA8FF" stroke-width="2"/><path d="M4 8.5H11" stroke="#1050B0" stroke-width="1.6"/><path d="M4.5 7Q7 3.5 10 6" stroke="#1050B0" stroke-width="1.4" fill="none"/><path d="M9 11.5L13 12" stroke="#F4F0D0" stroke-width="2.5"/><path d="M3 4Q9 -1 15 2" stroke="#3C9CF8" stroke-width="1.6" fill="none"/><circle cx="14" cy="5" r="1.4" fill="#E04020"/></svg>
<svg style="position:absolute;left:133px;top:638px" width="17" height="16"><rect x="1" y="6" width="15" height="9" rx="1.5" fill="#F0C050" stroke="#B07818"/><rect x="4" y="1" width="9" height="7" fill="#E8F0FF" stroke="#8098C0"/><rect x="3" y="9" width="11" height="4" fill="#E0E8F8"/></svg>
<div style="left:161px;top:636px;width:158px;height:23px;border-radius:3px;background:linear-gradient(#5A9AF8 0,#3C80F4 2px,#3A7CF2 20px,#3070E0 23px);box-shadow:inset -1px -1px 0 #2860D0"></div>
<svg style="position:absolute;left:170px;top:640px" width="16" height="14"><path d="M1 4H6L7.5 2.5H11V4H15V13H1Z" fill="#D8A830" stroke="#9C7010" stroke-width="1"/><path d="M1 6H15V13H1Z" fill="#F8D868"/></svg>
<div class="t" style="left:189px;top:641px;color:#fff">Sources</div>
<div style="left:321px;top:636px;width:158px;height:23px;border-radius:3px;background:linear-gradient(#5A9AF8 0,#3C80F4 2px,#3A7CF2 20px,#3070E0 23px);box-shadow:inset -1px -1px 0 #2860D0"></div>
<svg style="position:absolute;left:330px;top:640px" width="16" height="14"><path d="M1 4H6L7.5 2.5H11V4H15V13H1Z" fill="#D8A830" stroke="#9C7010" stroke-width="1"/><path d="M1 6H15V13H1Z" fill="#F8D868"/></svg>
<div class="t" style="left:349px;top:641px;color:#fff">led-interrupt/leds/So...</div>
<div style="left:481px;top:636px;width:158px;height:23px;border-radius:3px;background:linear-gradient(#5A9AF8 0,#3C80F4 2px,#3A7CF2 20px,#3070E0 23px);box-shadow:inset -1px -1px 0 #2860D0"></div>
<svg style="position:absolute;left:490px;top:639px" width="16" height="16"><rect x="0" y="0" width="4" height="16" fill="#000"/><path d="M1 1h2M1 4h2M1 7h2M1 10h2M1 13h2" stroke="#E8D000"/><circle cx="10" cy="9" r="5.5" fill="#909090" stroke="#404040"/><circle cx="10" cy="9" r="2" fill="#D0D0D0"/></svg>
<div class="t" style="left:509px;top:641px;color:#fff">Freescale CodeWarri...</div>
<div style="left:640px;top:635px;width:160px;height:25px;border-radius:3px;background:#1E48B0;box-shadow:inset 1px 1px 0 #143A98"></div>
<svg style="position:absolute;left:650px;top:639px" width="16" height="16"><rect x="0" y="0" width="4" height="16" fill="#000"/><path d="M1 1h2M1 4h2M1 7h2M1 10h2M1 13h2" stroke="#E8D000"/><rect x="4" y="0" width="12" height="16" fill="#2050D0"/><path d="M8 2V12" stroke="#208020" stroke-width="2"/><path d="M5 3Q8 0 12 3" stroke="#30B030" stroke-width="2" fill="none"/><circle cx="11" cy="11" r="3" fill="#40C0F0"/></svg>
<div class="t" style="left:670px;top:642px;color:#fff">True-Time Simulator ...</div>
<div style="left:801px;top:636px;width:158px;height:23px;border-radius:3px;background:linear-gradient(#5A9AF8 0,#3C80F4 2px,#3A7CF2 20px,#3070E0 23px);box-shadow:inset -1px -1px 0 #2860D0"></div>
<svg style="position:absolute;left:810px;top:639px" width="16" height="16"><path d="M2 2H12L14 14H4Z" fill="#90D0F0" stroke="#4080B0"/><path d="M3 2h9" stroke="#808080" stroke-dasharray="1 1"/></svg>
<div class="t" style="left:829px;top:641px;color:#fff">Unbenannt - Editor</div>
<div style="left:1303px;top:632px;width:57px;height:30px;background:linear-gradient(#0C5CC8 0,#18ACF4 2px,#1398EC 6px,#1190E8 24px,#0E78D8 30px);border-left:1px solid #0A2E88"></div>
<div style="left:1276px;top:640px;width:14px;height:16px;background:#3468C8"></div>
<div class="t" style="left:1277px;top:641px;color:#fff">DE</div>
<svg style="position:absolute;left:1294px;top:638px" width="19" height="19"><defs><radialGradient id="tg" cx="35%" cy="30%" r="70%"><stop offset="0" stop-color="#8CD0FF"/><stop offset="0.6" stop-color="#1C7CF0"/><stop offset="1" stop-color="#0C50D0"/></radialGradient></defs><circle cx="9.5" cy="9.5" r="8.5" fill="url(#tg)" stroke="#7090C0" stroke-width="1"/><path d="M11 5L7 9.5L11 14" stroke="#fff" stroke-width="2.4" fill="none"/></svg>
<div class="t" style="left:1319px;top:641px;color:#fff">18:35</div>
</body></html>
